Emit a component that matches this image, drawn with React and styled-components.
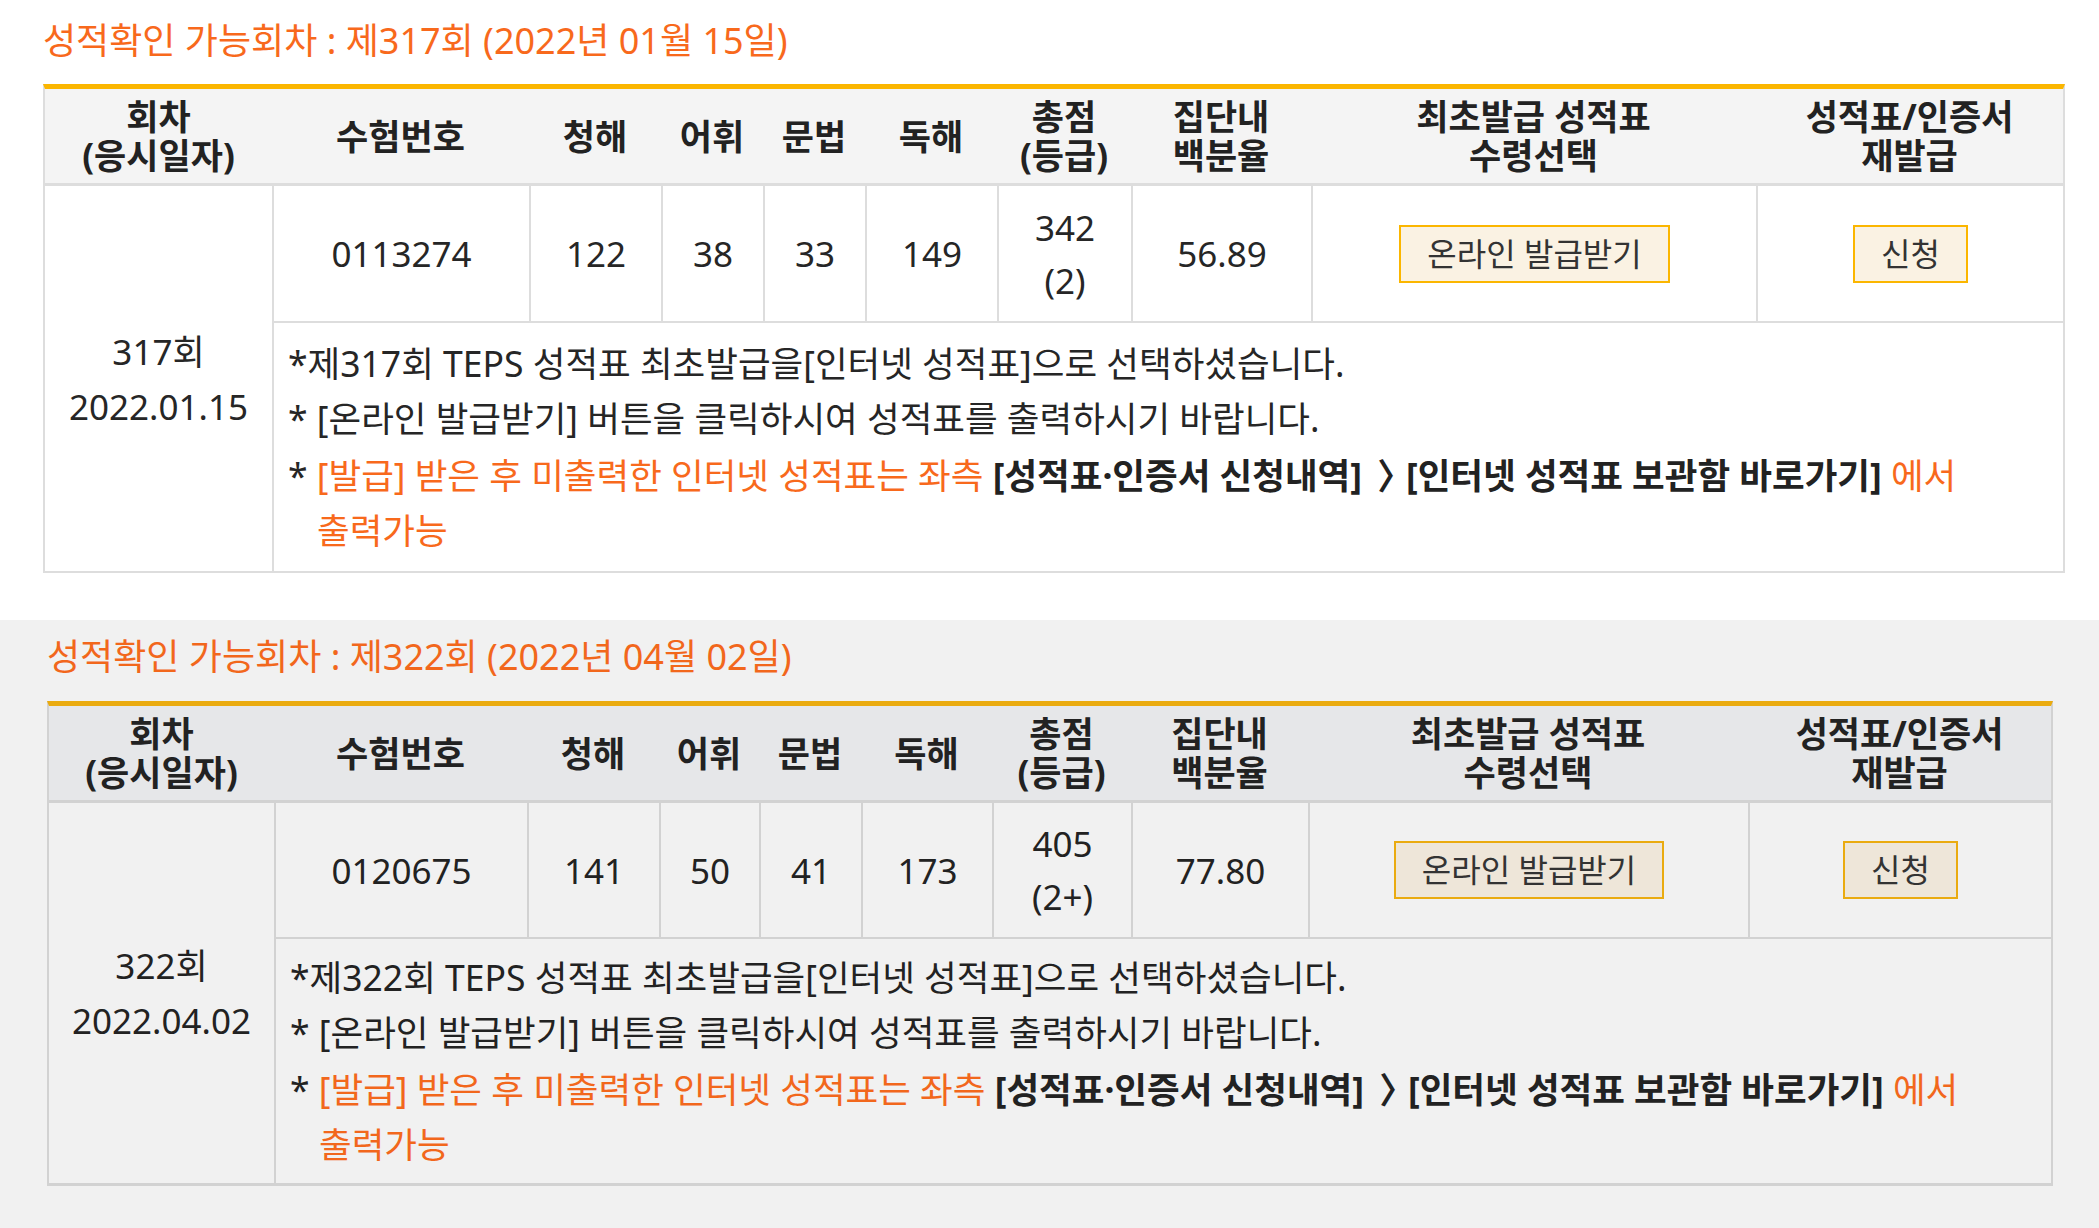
import React from 'react';
import styled, { createGlobalStyle } from 'styled-components';

const GlobalStyle = createGlobalStyle`
  html, body { margin: 0; padding: 0; background: #ffffff; }
  body {
    font-family: "Noto Sans", "Noto Sans CJK KR", "DejaVu Sans", sans-serif;
    color: #262626;
  }
  * { box-sizing: border-box; }
`;

const tones = {
  light: {
    bg: '#ffffff', head: '#f4f4f4', line: '#dddddd', accent: '#fbb600',
    btnBg: '#faf2e3', title: '#f8691c', text: '#262626',
  },
  dim: {
    bg: '#f1f1f1', head: '#e6e7e9', line: '#d2d2d2', accent: '#eaab10',
    btnBg: '#eee6d9', title: '#f2671c', text: '#222222',
  },
};

const Page = styled.div`
  width: 2099px;
  min-height: 1228px;
  display: flex;
  flex-direction: column;
  background: #f1f1f1;
`;

const Section = styled.section`
  background: ${(p) => tones[p.$tone].bg};
  padding: ${(p) => p.$pad};
  display: flex;
  flex-direction: column;
  align-items: flex-start;
`;

const Title = styled.h2`
  margin: 0 0 ${(p) => p.$gap}px 0;
  font-size: 36px;
  line-height: 50px;
  font-weight: 400;
  color: ${(p) => tones[p.$tone].title};
  white-space: nowrap;
`;

const Grid = styled.div`
  display: grid;
  width: ${(p) => p.$width}px;
  grid-template-columns: ${(p) => p.$cols.map((w) => `${w}px`).join(' ')};
  grid-template-rows: ${(p) => p.$rows.map((h) => `${h}px`).join(' ')};
  border-top: 5px solid ${(p) => tones[p.$tone].accent};
  border-left: 2px solid ${(p) => tones[p.$tone].line};
  border-right: 2px solid ${(p) => tones[p.$tone].line};
  border-bottom: ${(p) => p.$bottom}px solid ${(p) => tones[p.$tone].line};
  background: ${(p) => tones[p.$tone].bg};
  color: ${(p) => tones[p.$tone].text};
`;

const HeadCell = styled.div`
  display: flex;
  align-items: center;
  justify-content: center;
  text-align: center;
  background: ${(p) => tones[p.$tone].head};
  border-bottom: 3px solid ${(p) => tones[p.$tone].line};
  font-size: 35px;
  font-weight: 700;
  line-height: 39px;
  color: #222222;
  white-space: nowrap;
`;

const Cell = styled.div`
  display: flex;
  align-items: center;
  justify-content: center;
  text-align: center;
  border-left: 2px solid ${(p) => tones[p.$tone].line};
  border-bottom: 2px solid ${(p) => tones[p.$tone].line};
  font-size: 35px;
  line-height: 53px;
  white-space: nowrap;
`;

const RoundCell = styled.div`
  grid-row: span 2;
  display: flex;
  align-items: center;
  justify-content: center;
  text-align: center;
  font-size: 35px;
  line-height: 55px;
  white-space: nowrap;
`;

const InfoCell = styled.div`
  grid-column: span 9;
  display: flex;
  flex-direction: column;
  justify-content: center;
  padding: 0 14px;
  border-left: 2px solid ${(p) => tones[p.$tone].line};
  font-size: 35.5px;
`;

const Note = styled.p`
  margin: 0;
  padding-left: 29px;
  text-indent: -29px;
  line-height: 55px;
  white-space: nowrap;
`;

const Orange = styled.span`
  color: ${(p) => tones[p.$tone].title};
`;

const Strong = styled.span`
  font-weight: 700;
  color: #222222;
`;

const Chevron = styled.span`
  font-family: "Noto Sans CJK KR", sans-serif;
  margin: 0 -16px 0 6px;
`;

const ActionButton = styled.button`
  height: 58px;
  padding: 0 26px;
  border: 2px solid ${(p) => tones[p.$tone].accent};
  background: ${(p) => tones[p.$tone].btnBg};
  font-family: inherit;
  font-size: 32px;
  line-height: 1;
  color: #333333;
  cursor: pointer;
  white-space: nowrap;
`;

const headers = [
  ['회차', '(응시일자)'],
  ['수험번호'],
  ['청해'],
  ['어휘'],
  ['문법'],
  ['독해'],
  ['총점', '(등급)'],
  ['집단내', '백분율'],
  ['최초발급 성적표', '수령선택'],
  ['성적표/인증서', '재발급'],
];

const exams = [
  {
    tone: 'light',
    pad: '16px 0 47px 43px',
    gap: 18,
    width: 2022,
    cols: [227, 257, 132, 102, 102, 132, 134, 180, 445, 307],
    rows: [97, 137, 248],
    bottom: 2,
    round: '317',
    dateLong: '2022년 01월 15일',
    date: '2022.01.15',
    number: '0113274',
    scores: ['122', '38', '33', '149'],
    total: '342',
    grade: '(2)',
    percent: '56.89',
  },
  {
    tone: 'dim',
    pad: '12px 0 42px 47px',
    gap: 19,
    width: 2006,
    cols: [225, 253, 132, 100, 102, 131, 139, 177, 440, 303],
    rows: [97, 136, 244],
    bottom: 3,
    round: '322',
    dateLong: '2022년 04월 02일',
    date: '2022.04.02',
    number: '0120675',
    scores: ['141', '50', '41', '173'],
    total: '405',
    grade: '(2+)',
    percent: '77.80',
  },
];

function Lines({ items }) {
  return items.map((t, i) => (
    <React.Fragment key={i}>
      {i > 0 && <br />}
      {t}
    </React.Fragment>
  ));
}

function ExamBlock({ exam }) {
  const t = exam.tone;
  return (
    <Section $tone={t} $pad={exam.pad}>
      <Title $tone={t} $gap={exam.gap}>
        성적확인 가능회차 : 제{exam.round}회 ({exam.dateLong})
      </Title>
      <Grid
        $tone={t}
        $width={exam.width}
        $cols={exam.cols}
        $rows={exam.rows}
        $bottom={exam.bottom}
      >
        {headers.map((h, i) => (
          <HeadCell key={i} $tone={t}>
            <div>
              <Lines items={h} />
            </div>
          </HeadCell>
        ))}
        <RoundCell $tone={t}>
          <div>
            {exam.round}회
            <br />
            {exam.date}
          </div>
        </RoundCell>
        <Cell $tone={t}>{exam.number}</Cell>
        {exam.scores.map((s, i) => (
          <Cell key={i} $tone={t}>
            {s}
          </Cell>
        ))}
        <Cell $tone={t}>
          <div>
            {exam.total}
            <br />
            {exam.grade}
          </div>
        </Cell>
        <Cell $tone={t}>{exam.percent}</Cell>
        <Cell $tone={t}>
          <ActionButton $tone={t}>온라인 발급받기</ActionButton>
        </Cell>
        <Cell $tone={t}>
          <ActionButton $tone={t}>신청</ActionButton>
        </Cell>
        <InfoCell $tone={t}>
          <Note>*제{exam.round}회 TEPS 성적표 최초발급을[인터넷 성적표]으로 선택하셨습니다.</Note>
          <Note>* [온라인 발급받기] 버튼을 클릭하시여 성적표를 출력하시기 바랍니다.</Note>
          <Note>
            * <Orange $tone={t}>[발급] 받은 후 미출력한 인터넷 성적표는 좌측 </Orange>
            <Strong>
              [성적표·인증서 신청내역] <Chevron>〉</Chevron> [인터넷 성적표 보관함 바로가기]
            </Strong>
            <Orange $tone={t}> 에서</Orange>
            <br />
            <Orange $tone={t}>출력가능</Orange>
          </Note>
        </InfoCell>
      </Grid>
    </Section>
  );
}

export default function App() {
  return (
    <>
      <GlobalStyle />
      <Page>
        {exams.map((e) => (
          <ExamBlock key={e.round} exam={e} />
        ))}
      </Page>
    </>
  );
}
